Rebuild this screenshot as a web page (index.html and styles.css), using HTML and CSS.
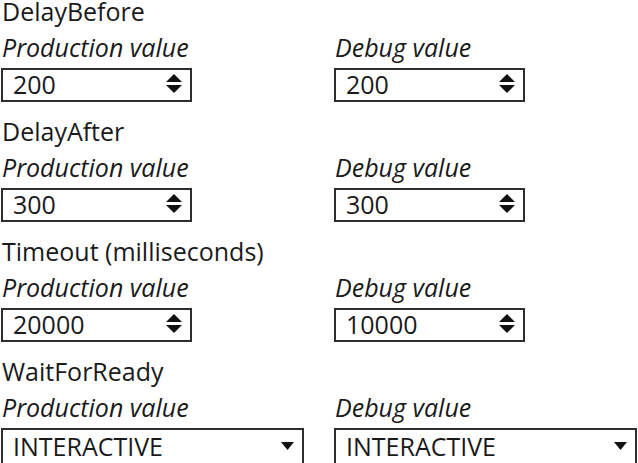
FILE: index.html
```html
<!DOCTYPE html>
<html>
<head>
<meta charset="utf-8">
<link rel="stylesheet" href="styles.css">
</head>
<body>
<div class="form">
  <section class="prop">
    <div class="prop-title">DelayBefore</div>
    <div class="pair">
      <div class="field">
        <div class="field-label">Production value</div>
        <div class="box spin"><span class="val">200</span><svg class="spin-icon" viewBox="0 0 16 19"><path d="M8 0 L16 8 L0 8 Z"/><path d="M0 11 L16 11 L8 19 Z"/></svg></div>
      </div>
      <div class="field">
        <div class="field-label">Debug value</div>
        <div class="box spin"><span class="val">200</span><svg class="spin-icon" viewBox="0 0 16 19"><path d="M8 0 L16 8 L0 8 Z"/><path d="M0 11 L16 11 L8 19 Z"/></svg></div>
      </div>
    </div>
  </section>
  <section class="prop">
    <div class="prop-title">DelayAfter</div>
    <div class="pair">
      <div class="field">
        <div class="field-label">Production value</div>
        <div class="box spin"><span class="val">300</span><svg class="spin-icon" viewBox="0 0 16 19"><path d="M8 0 L16 8 L0 8 Z"/><path d="M0 11 L16 11 L8 19 Z"/></svg></div>
      </div>
      <div class="field">
        <div class="field-label">Debug value</div>
        <div class="box spin"><span class="val">300</span><svg class="spin-icon" viewBox="0 0 16 19"><path d="M8 0 L16 8 L0 8 Z"/><path d="M0 11 L16 11 L8 19 Z"/></svg></div>
      </div>
    </div>
  </section>
  <section class="prop">
    <div class="prop-title">Timeout (milliseconds)</div>
    <div class="pair">
      <div class="field">
        <div class="field-label">Production value</div>
        <div class="box spin"><span class="val">20000</span><svg class="spin-icon" viewBox="0 0 16 19"><path d="M8 0 L16 8 L0 8 Z"/><path d="M0 11 L16 11 L8 19 Z"/></svg></div>
      </div>
      <div class="field">
        <div class="field-label">Debug value</div>
        <div class="box spin"><span class="val">10000</span><svg class="spin-icon" viewBox="0 0 16 19"><path d="M8 0 L16 8 L0 8 Z"/><path d="M0 11 L16 11 L8 19 Z"/></svg></div>
      </div>
    </div>
  </section>
  <section class="prop">
    <div class="prop-title">WaitForReady</div>
    <div class="pair">
      <div class="field">
        <div class="field-label">Production value</div>
        <div class="box select"><span class="val">INTERACTIVE</span><svg class="drop-icon" viewBox="0 0 13 8"><path d="M0 0 L13 0 L6.5 8 Z"/></svg></div>
      </div>
      <div class="field">
        <div class="field-label">Debug value</div>
        <div class="box select"><span class="val">INTERACTIVE</span><svg class="drop-icon" viewBox="0 0 13 8"><path d="M0 0 L13 0 L6.5 8 Z"/></svg></div>
      </div>
    </div>
  </section>
</div>
</body>
</html>
```
FILE: styles.css
```css
html, body {
  margin: 0;
  padding: 0;
  background: #ffffff;
}
body {
  font-family: "Open Sans", "Noto Sans", sans-serif;
  color: #1a1a1a;
  font-size: 25px;
}
.form {
  display: flex;
  flex-direction: column;
  padding-left: 1px;
}
.prop {
  height: 120px;
  display: flex;
  flex-direction: column;
}
.prop-title {
  height: 33px;
  line-height: 23px;
  padding-left: 1px;
}
.pair {
  display: grid;
  grid-template-columns: 333px 303px;
}
.field-label {
  font-style: italic;
  height: 35px;
  line-height: 29px;
  padding-left: 1px;
}
.box {
  box-sizing: border-box;
  height: 34px;
  border: 2px solid #2e2e2e;
  display: flex;
  align-items: center;
  justify-content: space-between;
  padding: 0 8px 3px 10px;
}
.spin {
  width: 191px;
}
.select {
  width: 303px;
  height: 40px;
  padding-bottom: 4px;
}
.val {
  line-height: 28px;
}
.spin-icon {
  width: 16px;
  height: 19px;
  fill: #111;
}
.drop-icon {
  width: 13px;
  height: 8px;
  fill: #111;
}
```
